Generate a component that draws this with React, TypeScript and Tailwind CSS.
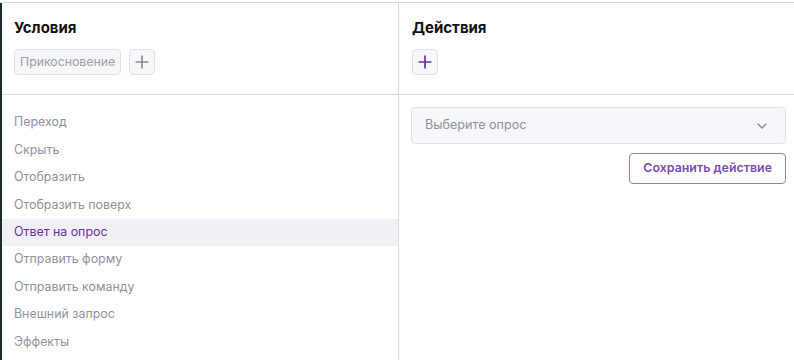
import { ChevronDown, Plus } from 'lucide-react';

const items = [
  'Переход',
  'Скрыть',
  'Отобразить',
  'Отобразить поверх',
  'Ответ на опрос',
  'Отправить форму',
  'Отправить команду',
  'Внешний запрос',
  'Эффекты',
];

export default function App() {
  const selected = 'Ответ на опрос';

  return (
    <div className="w-[794px] h-[360px] bg-white overflow-hidden pt-[2px] font-['Inter','Liberation_Sans',sans-serif]">
      <div className="flex h-full border-t border-[#d5d9e0]">
        {/* left strip */}
        <div className="w-[2px] bg-[#1e2b26]" />

        {/* conditions */}
        <div className="w-[397px] flex flex-col border-r border-[#d5d9e0]">
          <div className="h-[92px] border-b border-[#d5d9e0] px-3 pt-[15px]">
            <h2 className="text-[15px] font-bold text-[#111] leading-5">Условия</h2>
            <div className="flex gap-2 mt-[11px]">
              <span className="h-[26px] px-[5px] flex items-center rounded border border-[#dfe3e8] bg-[#f5f7fa] text-[12.3px] text-[#9aa0aa]">
                Прикосновение
              </span>
              <button className="w-[26px] h-[26px] flex items-center justify-center rounded border border-[#dfe3e8] bg-[#f5f7fa] text-[#858a94]">
                <Plus size={20} strokeWidth={2} />
              </button>
            </div>
          </div>
          <ul className="pt-[14px]">
            {items.map((it) => (
              <li
                key={it}
                className={`h-[27.4px] flex items-center px-3 text-[12.4px] ${
                  it === selected ? 'bg-[#f2f0f7] text-[#6b2ea3]' : 'text-[#8f939d]'
                }`}
              >
                {it}
              </li>
            ))}
          </ul>
        </div>

        {/* actions */}
        <div className="flex-1 flex flex-col">
          <div className="h-[92px] border-b border-[#d5d9e0] px-[13px] pt-[15px]">
            <h2 className="text-[15px] font-bold text-[#111] leading-5">Действия</h2>
            <div className="flex mt-[11px]">
              <button className="w-[26px] h-[26px] flex items-center justify-center rounded border border-[#dfe3e8] bg-[#f5f7fa] text-[#6b2ea3]">
                <Plus size={20} strokeWidth={2} />
              </button>
            </div>
          </div>
          <div className="pl-3 pr-2 pt-3 flex flex-col items-end gap-[9px]">
            <div className="w-full h-[37px] flex items-center justify-between rounded border border-[#dfe3e8] bg-[#f5f7fa] pl-[13px] pr-[15px]">
              <span className="text-[12.6px] text-[#8f939d]">Выберите опрос</span>
              <ChevronDown size={16} strokeWidth={2} className="text-[#858a94]" />
            </div>
            <button className="h-[31px] px-[13px] rounded border border-[#9b7ac4] text-[12.4px] font-semibold text-[#7b4bb0]">
              Сохранить действие
            </button>
          </div>
        </div>
      </div>
    </div>
  );
}
